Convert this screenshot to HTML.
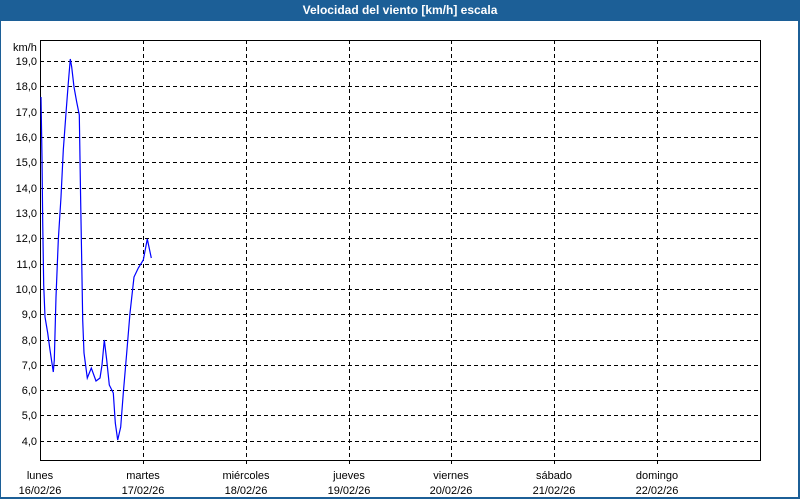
<!DOCTYPE html>
<html><head><meta charset="utf-8"><style>
html,body{margin:0;padding:0;background:#fff;}
body{width:800px;height:500px;position:relative;overflow:hidden;font-family:"Liberation Sans",sans-serif;}
#t{position:absolute;left:0;top:0;width:800px;height:21px;background:#1c5f97;color:#fff;font-weight:bold;font-size:12px;text-align:center;line-height:21px;}
#frame{position:absolute;left:0;top:21px;width:797px;height:476px;border-left:1px solid #1c5f97;border-right:2px solid #1c5f97;border-bottom:2px solid #1c5f97;}
</style></head><body>
<div id="t">Velocidad del viento [km/h] escala</div>
<div id="frame"></div>
<svg width="800" height="500" style="position:absolute;left:0;top:0" font-family="Liberation Sans, sans-serif" font-size="11" fill="#000">
<g stroke="#000" stroke-width="1" stroke-dasharray="4,3" shape-rendering="crispEdges">
<line x1="40" x2="760" y1="61.5" y2="61.5"/><line x1="40" x2="760" y1="86.5" y2="86.5"/><line x1="40" x2="760" y1="112.5" y2="112.5"/><line x1="40" x2="760" y1="137.5" y2="137.5"/><line x1="40" x2="760" y1="162.5" y2="162.5"/><line x1="40" x2="760" y1="188.5" y2="188.5"/><line x1="40" x2="760" y1="213.5" y2="213.5"/><line x1="40" x2="760" y1="238.5" y2="238.5"/><line x1="40" x2="760" y1="264.5" y2="264.5"/><line x1="40" x2="760" y1="289.5" y2="289.5"/><line x1="40" x2="760" y1="314.5" y2="314.5"/><line x1="40" x2="760" y1="340.5" y2="340.5"/><line x1="40" x2="760" y1="365.5" y2="365.5"/><line x1="40" x2="760" y1="390.5" y2="390.5"/><line x1="40" x2="760" y1="415.5" y2="415.5"/><line x1="40" x2="760" y1="441.5" y2="441.5"/>
<line x1="143.5" x2="143.5" y1="40" y2="466"/><line x1="246.5" x2="246.5" y1="40" y2="466"/><line x1="349.5" x2="349.5" y1="40" y2="466"/><line x1="451.5" x2="451.5" y1="40" y2="466"/><line x1="554.5" x2="554.5" y1="40" y2="466"/><line x1="657.5" x2="657.5" y1="40" y2="466"/>
</g>
<rect x="40.5" y="40.5" width="720" height="420" fill="none" stroke="#000" shape-rendering="crispEdges"/>
<polyline fill="none" stroke="#0000ff" stroke-width="1.2" points="41,97 42,158 42.7,222 43.7,285 45,317 47.7,333 50,350 53.3,372 54.3,360 56,297 58.3,240 61,197 63.3,150 66,113 68.3,83 70.3,59 71.7,67 74,87 76.7,102 79.3,115 80.7,203 81.7,260 82.7,320 84,353 87.3,378 91.3,368 96,381 100,378 102,365 104.3,340 106.7,360 109.3,385 113.3,393 115.3,423 117.7,440 120.7,427 123.3,393 126.7,353 130,313 134,277 138.3,268 143.3,260 147.3,239 151.3,258"/>
<g text-anchor="end">
<text x="37" y="65">19,0</text><text x="37" y="90">18,0</text><text x="37" y="116">17,0</text><text x="37" y="141">16,0</text><text x="37" y="166">15,0</text><text x="37" y="192">14,0</text><text x="37" y="217">13,0</text><text x="37" y="242">12,0</text><text x="37" y="268">11,0</text><text x="37" y="293">10,0</text><text x="37" y="318">9,0</text><text x="37" y="344">8,0</text><text x="37" y="369">7,0</text><text x="37" y="394">6,0</text><text x="37" y="419">5,0</text><text x="37" y="445">4,0</text>
</g>
<text x="13" y="51">km/h</text>
<g text-anchor="middle">
<text x="40" y="479">lunes</text><text x="40" y="494">16/02/26</text>
<text x="143" y="479">martes</text><text x="143" y="494">17/02/26</text>
<text x="246" y="479">miércoles</text><text x="246" y="494">18/02/26</text>
<text x="349" y="479">jueves</text><text x="349" y="494">19/02/26</text>
<text x="451" y="479">viernes</text><text x="451" y="494">20/02/26</text>
<text x="554" y="479">sábado</text><text x="554" y="494">21/02/26</text>
<text x="657" y="479">domingo</text><text x="657" y="494">22/02/26</text>
</g>
</svg>
</body></html>
